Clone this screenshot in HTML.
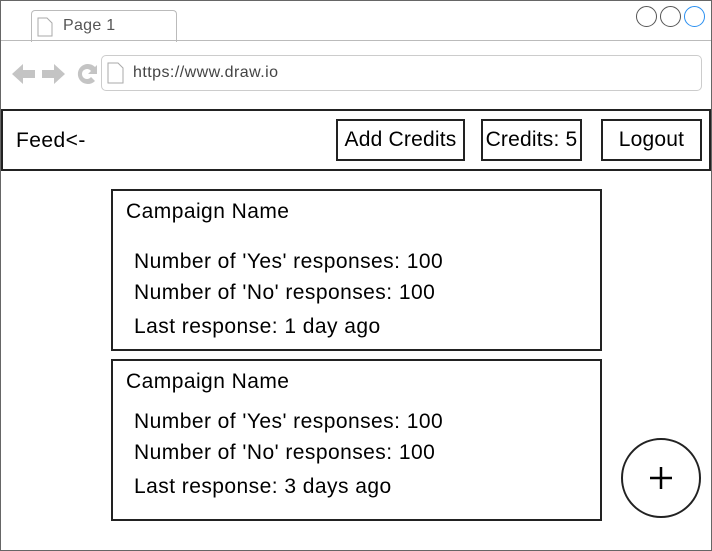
<!DOCTYPE html>
<html><head><style>
*{margin:0;padding:0;box-sizing:border-box}
body{width:712px;height:551px;position:relative;font-family:"Liberation Sans",sans-serif;background:#fff;overflow:hidden}
.a{position:absolute}
.btn{position:absolute;border:2px solid #222;font-size:21px;letter-spacing:0.2px;display:flex;align-items:center;justify-content:center;color:#000}
.card{position:absolute;left:111px;width:491px;border:2px solid #222}
.t{position:absolute;font-size:21px;letter-spacing:0.45px;color:#000;white-space:nowrap}
.c{position:absolute;top:6px;width:21px;height:21px;border-radius:50%;border:1px solid #555}
</style></head><body>
<div class="a" style="left:0;top:0;width:712px;height:551px;border:1px solid #666"></div>
<div class="a" style="left:31px;top:10px;width:146px;height:32px;border:1px solid #bbb;border-bottom:none;border-radius:4px 4px 0 0;background:#fff"></div>
<div class="a" style="left:1px;top:40px;width:710px;height:1px;background:#bbb"></div>
<svg class="a" style="left:37px;top:17px" width="16" height="20"><path d="M1 1h9l5 5v13H1z" fill="#fff" stroke="#aaa"/></svg>
<div class="t" style="left:63px;top:17px;font-size:16px;letter-spacing:0.3px;color:#555">Page 1</div>
<div class="c" style="left:636px"></div><div class="c" style="left:660px"></div><div class="c" style="left:684px;border-color:#2a8ff0"></div>
<svg class="a" style="left:11px;top:62px" width="90" height="24"><path d="M1 12l11-10v6h12v8h-12v6z" fill="#c4c4c4"/><path d="M54 12l-11-10v6h-12v8h12v6z" fill="#c4c4c4"/><path d="M84 5a10 10 0 1 0 0 14l-4-4a5 5 0 1 1 0-6l-3 3h9v-9z" fill="#c4c4c4"/></svg>
<div class="a" style="left:101px;top:55px;width:601px;height:36px;border:1px solid #ccc;border-radius:5px"></div>
<svg class="a" style="left:107px;top:62px" width="18" height="22"><path d="M1 1h10l5 5v15H1z" fill="#fff" stroke="#aaa"/></svg>
<div class="t" style="left:133px;top:64px;font-size:16px;letter-spacing:0.45px;color:#444">https://www.draw.io</div>
<div class="a" style="left:1px;top:109px;width:710px;height:62px;border:2px solid #222"></div>
<div class="t" style="left:16px;top:129px">Feed&lt;-</div>
<div class="btn" style="left:336px;top:119px;width:129px;height:42px">Add Credits</div>
<div class="btn" style="left:481px;top:119px;width:101px;height:42px">Credits: 5</div>
<div class="btn" style="left:601px;top:119px;width:101px;height:42px">Logout</div>
<div class="card" style="top:189px;height:162px"></div>
<div class="t" style="left:126px;top:200px">Campaign Name</div>
<div class="t" style="left:134px;top:250px">Number of 'Yes' responses: 100</div>
<div class="t" style="left:134px;top:281px">Number of 'No' responses: 100</div>
<div class="t" style="left:134px;top:315px">Last response: 1 day ago</div>
<div class="card" style="top:359px;height:162px"></div>
<div class="t" style="left:126px;top:370px">Campaign Name</div>
<div class="t" style="left:134px;top:410px">Number of 'Yes' responses: 100</div>
<div class="t" style="left:134px;top:441px">Number of 'No' responses: 100</div>
<div class="t" style="left:134px;top:475px">Last response: 3 days ago</div>
<div class="a" style="left:621px;top:438px;width:80px;height:80px;border:2px solid #222;border-radius:50%"></div>
<svg class="a" style="left:649px;top:466px" width="24" height="24"><path d="M12 1v22M1 12h22" stroke="#000" stroke-width="2.5"/></svg>
</body></html>
